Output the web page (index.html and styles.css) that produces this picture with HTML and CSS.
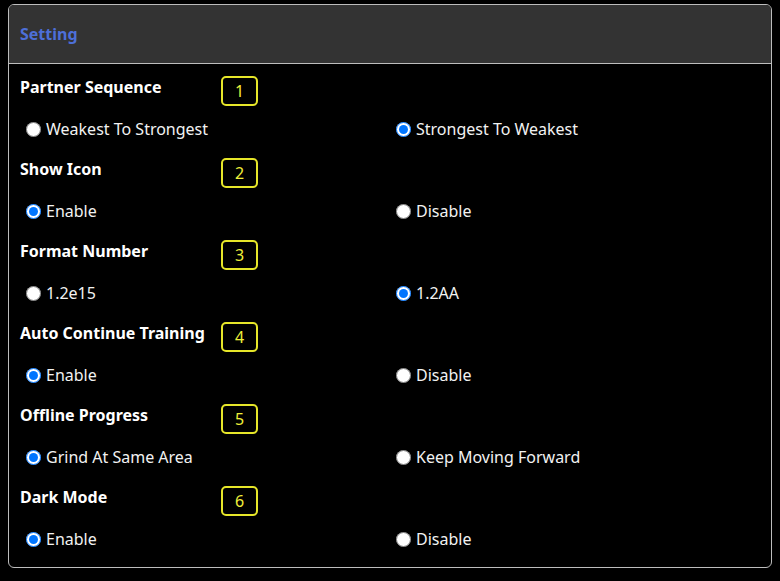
FILE: index.html
```html
<!DOCTYPE html>
<html>
<head>
<meta charset="utf-8">
<link rel="stylesheet" href="styles.css">
</head>
<body>
<div class="card">
  <div class="card-header">Setting</div>
  <div class="card-body">
    <div class="section">
      <div class="title-row"><span class="title">Partner Sequence</span><span class="badge">1</span></div>
      <div class="options">
        <label class="opt"><input type="radio" name="s1"><span>Weakest To Strongest</span></label>
        <label class="opt"><input type="radio" name="s1" checked><span>Strongest To Weakest</span></label>
      </div>
    </div>
    <div class="section">
      <div class="title-row"><span class="title">Show Icon</span><span class="badge">2</span></div>
      <div class="options">
        <label class="opt"><input type="radio" name="s2" checked><span>Enable</span></label>
        <label class="opt"><input type="radio" name="s2"><span>Disable</span></label>
      </div>
    </div>
    <div class="section">
      <div class="title-row"><span class="title">Format Number</span><span class="badge">3</span></div>
      <div class="options">
        <label class="opt"><input type="radio" name="s3"><span>1.2e15</span></label>
        <label class="opt"><input type="radio" name="s3" checked><span>1.2AA</span></label>
      </div>
    </div>
    <div class="section">
      <div class="title-row"><span class="title">Auto Continue Training</span><span class="badge">4</span></div>
      <div class="options">
        <label class="opt"><input type="radio" name="s4" checked><span>Enable</span></label>
        <label class="opt"><input type="radio" name="s4"><span>Disable</span></label>
      </div>
    </div>
    <div class="section">
      <div class="title-row"><span class="title">Offline Progress</span><span class="badge">5</span></div>
      <div class="options">
        <label class="opt"><input type="radio" name="s5" checked><span>Grind At Same Area</span></label>
        <label class="opt"><input type="radio" name="s5"><span>Keep Moving Forward</span></label>
      </div>
    </div>
    <div class="section">
      <div class="title-row"><span class="title">Dark Mode</span><span class="badge">6</span></div>
      <div class="options">
        <label class="opt"><input type="radio" name="s6" checked><span>Enable</span></label>
        <label class="opt"><input type="radio" name="s6"><span>Disable</span></label>
      </div>
    </div>
  </div>
</div>
</body>
</html>
```
FILE: styles.css
```css
html, body {
  background: #000;
}
body {
  margin: 4px 8px 0 8px;
  font-family: "Noto Sans", "Open Sans", sans-serif;
  color: #fff;
}
.card {
  width: 764px;
  height: 564px;
  box-sizing: border-box;
  border: 1.5px solid #bdbdbd;
  border-radius: 6px;
  overflow: hidden;
}
.card-header {
  height: 59px;
  box-sizing: border-box;
  background: #333333;
  border-bottom: 1.5px solid #bdbdbd;
  color: #4d6fd8;
  font-weight: 700;
  font-size: 16px;
  padding: 18px 0 0 11px;
}
.card-body {
  padding: 12px 0 0 11px;
}
.section {
  height: 82px;
  display: flex;
  flex-direction: column;
}
.title-row {
  display: flex;
  align-items: center;
  height: 30px;
}
.title {
  width: 201px;
  font-weight: 700;
  font-size: 16px;
  margin-top: -8px;
}
.badge {
  width: 33px;
  height: 26px;
  border: 2px solid #e6e629;
  border-radius: 5px;
  color: #f0f03a;
  font-size: 16px;
  display: flex;
  align-items: center;
  justify-content: center;
}
.options {
  display: grid;
  grid-template-columns: 370px 370px;
  height: 40px;
  align-items: center;
  margin-top: 3px;
}
.opt {
  display: flex;
  align-items: center;
  font-size: 16px;
  color: #f2f2f2;
}
.opt input {
  width: 15px;
  height: 15px;
  margin: 0 5px 0 6px;
}
```
